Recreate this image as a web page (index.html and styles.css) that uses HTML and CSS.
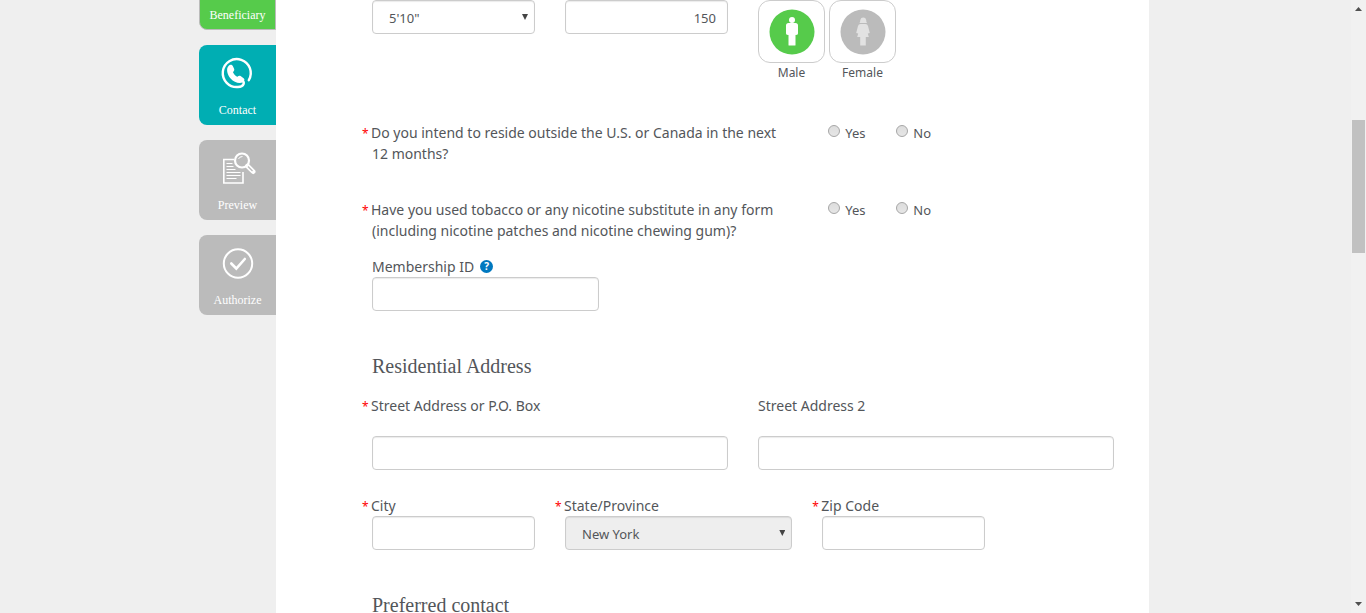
FILE: index.html
```html
<!DOCTYPE html>
<html lang="en">
<head>
<meta charset="utf-8">
<title>Application</title>
<link rel="stylesheet" href="styles.css">
</head>
<body>
<div class="viewport">
  <div class="page">
    <nav class="steps" aria-label="Steps">
      <button type="button" class="step step-done">Beneficiary</button>
      <button type="button" class="step step-current">
        <svg class="step-icon" viewBox="0 0 36 36" aria-hidden="true">
          <path d="M28.800 24.200A14 14 0 1 0 18 31C24 31 25.500 26 21.500 24" fill="none" stroke="#fff" stroke-width="2.400" stroke-linecap="round"/>
          <path d="M8.500 10c1.400-1.800 3.400-1.800 4.300.1l1.300 2.700c.6 1.500-.2 2.300-1 3.200-.5.800 3.300 5 4.300 4.700 1.100-.8 2-1.300 3.200-.6l3 2.200c1.600 1.200.7 3-.8 3.900-3.300 1.900-8.700.3-12.200-3.700-3.500-4-4.700-9.800-2.100-12.500z" fill="#fff"/>
        </svg>
        Contact
      </button>
      <button type="button" class="step">
        <svg class="step-icon" viewBox="0 0 36 36" fill="none" stroke="#fff" aria-hidden="true">
          <path d="M14 8.500H3.800v23.500h19.200v-11" stroke-width="1.600"/>
          <path d="M6.500 12.500h6M6.500 15.500h7M6.500 18.500h9M6.500 21.500h14M6.500 24.500h14M6.500 27.500h10" stroke-width="1.200"/>
          <circle cx="22" cy="9.500" r="7" stroke-width="2.200"/>
          <path d="M18.500 8q1-2.500 4-2.500" stroke-width="1"/>
          <path d="M27.500 15l5.700 5.700" stroke-width="4.600" stroke-linecap="round"/>
          <path d="M28 15.500l4.500 4.500" stroke="#bbb" stroke-width="1.300"/>
        </svg>
        Preview
      </button>
      <button type="button" class="step">
        <svg class="step-icon" viewBox="0 0 36 36" fill="none" stroke="#fff" aria-hidden="true">
          <circle cx="18" cy="17.500" r="14.200" stroke-width="2"/>
          <path d="M11.300 17.500l5 5 8.500-9.500" stroke-width="2.600" stroke-linecap="round"/>
        </svg>
        Authorize
      </button>
    </nav>

    <main class="panel">
      <form class="form">
        <div class="row row-body">
          <div class="col-3 select-wrap">
            <select class="control" aria-label="Height"><option>5'10"</option></select>
          </div>
          <div class="col-3">
            <input class="control control-number" type="text" value="150" aria-label="Weight">
          </div>
          <div class="col-6 genders">
            <button type="button" class="gender" aria-pressed="true">
              <span class="gender-box">
                <svg viewBox="0 0 46 46" class="gender-icon" aria-hidden="true">
                  <circle cx="23" cy="23" r="22.500" fill="#56cb4b"/>
                  <circle cx="23" cy="11" r="3" fill="#fff"/>
                  <path d="M19.500 14h7q2.500 0 2.500 2.500v8q0 1.500-2.500 1.500v10q0 .5-.5.500h-6q-.5 0-.5-.5V26q-2.500 0-2.500-1.500v-8q0-2.500 2.500-2.500z" fill="#fff"/>
                </svg>
              </span>
              Male
            </button>
            <button type="button" class="gender" aria-pressed="false">
              <span class="gender-box">
                <svg viewBox="0 0 46 46" class="gender-icon" aria-hidden="true">
                  <circle cx="23" cy="23" r="22.500" fill="#bbb"/>
                  <path d="M19.500 14q.8-1 .8-3a3 3 0 0 1 5.900 0q0 2 .8 3z" fill="#e2e2e2"/>
                  <path d="M20.500 15h5q2 0 2.500 2l1.800 7-2 .6 1 3.400h-3v8.500h-5.600V28h-3l1-3.400-2-.6 1.800-7q.5-2 2.500-2z" fill="#e2e2e2"/>
                </svg>
              </span>
              Female
            </button>
          </div>
        </div>

        <div class="row row-question" role="radiogroup" aria-labelledby="q-reside">
          <p class="col-7 question" id="q-reside"><span class="required">*</span>Do you intend to reside outside the U.S. or Canada in the next 12 months?</p>
          <div class="col-5 answers">
            <label class="answer"><input class="radio" type="radio" name="reside">Yes</label>
            <label class="answer"><input class="radio" type="radio" name="reside">No</label>
          </div>
        </div>

        <div class="row row-question" role="radiogroup" aria-labelledby="q-tobacco">
          <p class="col-7 question" id="q-tobacco"><span class="required">*</span>Have you used tobacco or any nicotine substitute in any form (including nicotine patches and nicotine chewing gum)?</p>
          <div class="col-5 answers">
            <label class="answer"><input class="radio" type="radio" name="tobacco">Yes</label>
            <label class="answer"><input class="radio" type="radio" name="tobacco">No</label>
          </div>
        </div>

        <div class="row row-member">
          <div class="col-4">
            <div class="label-line">
              <label class="label" for="member">Membership ID</label>
              <button type="button" class="help" aria-label="Help">?</button>
            </div>
            <input class="control" id="member" type="text">
          </div>
        </div>

        <h2 class="heading">Residential Address</h2>

        <div class="row row-street">
          <div class="col-6">
            <label class="label label-spaced" for="street"><span class="required">*</span>Street Address or P.O. Box</label>
            <input class="control" id="street" type="text">
          </div>
          <div class="col-6">
            <label class="label label-spaced" for="street2">Street Address 2</label>
            <input class="control" id="street2" type="text">
          </div>
        </div>

        <div class="row row-city">
          <div class="col-3">
            <label class="label" for="city"><span class="required">*</span>City</label>
            <input class="control" id="city" type="text">
          </div>
          <div class="col-4">
            <label class="label" for="state"><span class="required">*</span>State/Province</label>
            <div class="select-wrap">
              <select class="control" id="state" disabled><option>New York</option></select>
            </div>
          </div>
          <div class="col-3">
            <label class="label" for="zip"><span class="required">*</span>Zip Code</label>
            <input class="control" id="zip" type="text">
          </div>
        </div>

        <h2 class="heading">Preferred contact</h2>
      </form>
    </main>
  </div>

  <div class="scrollbar" aria-hidden="true">
    <span class="arrow arrow-up"></span>
    <span class="thumb"></span>
    <span class="arrow arrow-down"></span>
  </div>
</div>
</body>
</html>
```

FILE: styles.css
```css
* {
  box-sizing: border-box;
}

body {
  margin: 0;
  background: #efefef;
  color: #53565a;
  font-family: "Noto Sans", "Open Sans", sans-serif;
  font-size: 14px;
  line-height: 21px;
}

button,
input,
select {
  font: inherit;
  color: inherit;
}

.viewport {
  display: flex;
  height: 100vh;
  overflow: hidden;
}

.page {
  flex: 1;
  display: flex;
  max-width: 953px;
  margin: 0 auto;
  padding-right: 3px;
}

/* Step tabs */
.steps {
  flex: none;
  width: 77px;
  display: flex;
  flex-direction: column;
  gap: 15px;
  margin-top: -50px;
}

.step {
  height: 80px;
  padding: 0 0 5px;
  display: flex;
  flex-direction: column;
  align-items: center;
  justify-content: flex-end;
  gap: 8px;
  border: 0;
  border-radius: 8px 0 0 8px;
  background: #bbb;
  color: #fff;
  font-family: "Liberation Serif", serif;
  font-size: 12px;
  line-height: 20px;
}

.step-done {
  padding-bottom: 4px;
  background: #56cb4b;
  border: 1px solid #bbb;
}

.step-current {
  background: #00aeb3;
}

.step-icon {
  width: 36px;
  height: 36px;
}

/* Form */
.panel {
  flex: 1;
  min-width: 0;
  padding: 0 20px 0 81px;
  background: #fff;
}

.row {
  display: grid;
  grid-template-columns: repeat(12, minmax(0, 1fr));
}

.col-3,
.col-4,
.col-5,
.col-6,
.col-7 {
  padding: 0 15px;
}

.col-3 { grid-column: span 3; }
.col-4 { grid-column: span 4; }
.col-5 { grid-column: span 5; }
.col-6 { grid-column: span 6; }
.col-7 { grid-column: span 7; }

.row-body {
  margin-bottom: 40px;
}

.row-question {
  margin-bottom: 35px;
}

.row-member {
  margin-top: -20px;
  margin-bottom: 43px;
}

.row-street {
  margin-bottom: 25px;
}

.row-city {
  margin-bottom: 43px;
}

.control {
  display: block;
  width: 100%;
  height: 34px;
  padding: 2px 11px 0;
  border: 1px solid #ccc;
  border-radius: 4px;
  background: #fff;
  box-shadow: inset 0 1px 1px rgba(0, 0, 0, 0.08);
  font-size: 13px;
}

.control-number {
  text-align: right;
}

select.control {
  appearance: none;
  padding: 2px 16px 0;
  opacity: 1;
}

select.control:disabled {
  background: #eee;
  color: #53565a;
}

.select-wrap {
  display: grid;
  grid-template-columns: minmax(0, 1fr);
  align-items: start;
}

.select-wrap > .control {
  grid-area: 1 / 1;
}

.select-wrap::after {
  content: "";
  grid-area: 1 / 1;
  justify-self: end;
  width: 6px;
  height: 6px;
  margin: 14px 7px 0 0;
  background: #444;
  clip-path: polygon(0 0, 100% 0, 50% 100%);
  pointer-events: none;
}

.genders {
  display: flex;
  gap: 4px;
}

.gender {
  width: 67px;
  padding: 0;
  border: 0;
  background: none;
  font-size: 12px;
  line-height: 19px;
}

.gender-box {
  display: flex;
  align-items: center;
  justify-content: center;
  height: 63px;
  border: 1px solid #ccc;
  border-radius: 12px;
}

.gender-icon {
  width: 46px;
  height: 46px;
}

.question {
  margin: 0;
}

.required {
  display: inline-block;
  width: 9px;
  margin-left: -10px;
  color: #f00;
  font-size: 12px;
  line-height: 12px;
}

.answers {
  display: flex;
  align-items: flex-start;
  padding-left: 21px;
  font-size: 13px;
  line-height: 23px;
}

.answer {
  display: flex;
  width: 68px;
  gap: 5px;
}

.radio {
  appearance: none;
  width: 12px;
  height: 12px;
  margin: 3px 0 0;
  border: 1px solid #a6a6a6;
  border-radius: 50%;
  background: linear-gradient(#ddd, #e6e6e6);
}

.label {
  display: block;
}

.label-spaced {
  margin-bottom: 20px;
}

.label-line {
  display: flex;
  align-items: center;
  gap: 6px;
}

.help {
  width: 13px;
  height: 13px;
  padding: 0;
  border: 0;
  border-radius: 50%;
  background: #0078bf;
  color: #fff;
  font-size: 10px;
  font-weight: 700;
  line-height: 13px;
}

.heading {
  margin: 0 15px 16px;
  font-family: "Liberation Serif", serif;
  font-size: 20px;
  font-weight: 400;
  line-height: 25px;
}

/* Scrollbar */
.scrollbar {
  flex: none;
  display: flex;
  flex-direction: column;
  align-items: center;
  width: 15px;
  padding: 7px 0;
  background: #f1f1f1;
}

.arrow {
  width: 7px;
  height: 4px;
  background: #505050;
}

.arrow-up {
  clip-path: polygon(50% 0, 100% 100%, 0 100%);
}

.arrow-down {
  margin-top: auto;
  clip-path: polygon(0 0, 100% 0, 50% 100%);
}

.thumb {
  width: 13px;
  height: 133px;
  margin-top: 109px;
  background: #c1c1c1;
}
```
